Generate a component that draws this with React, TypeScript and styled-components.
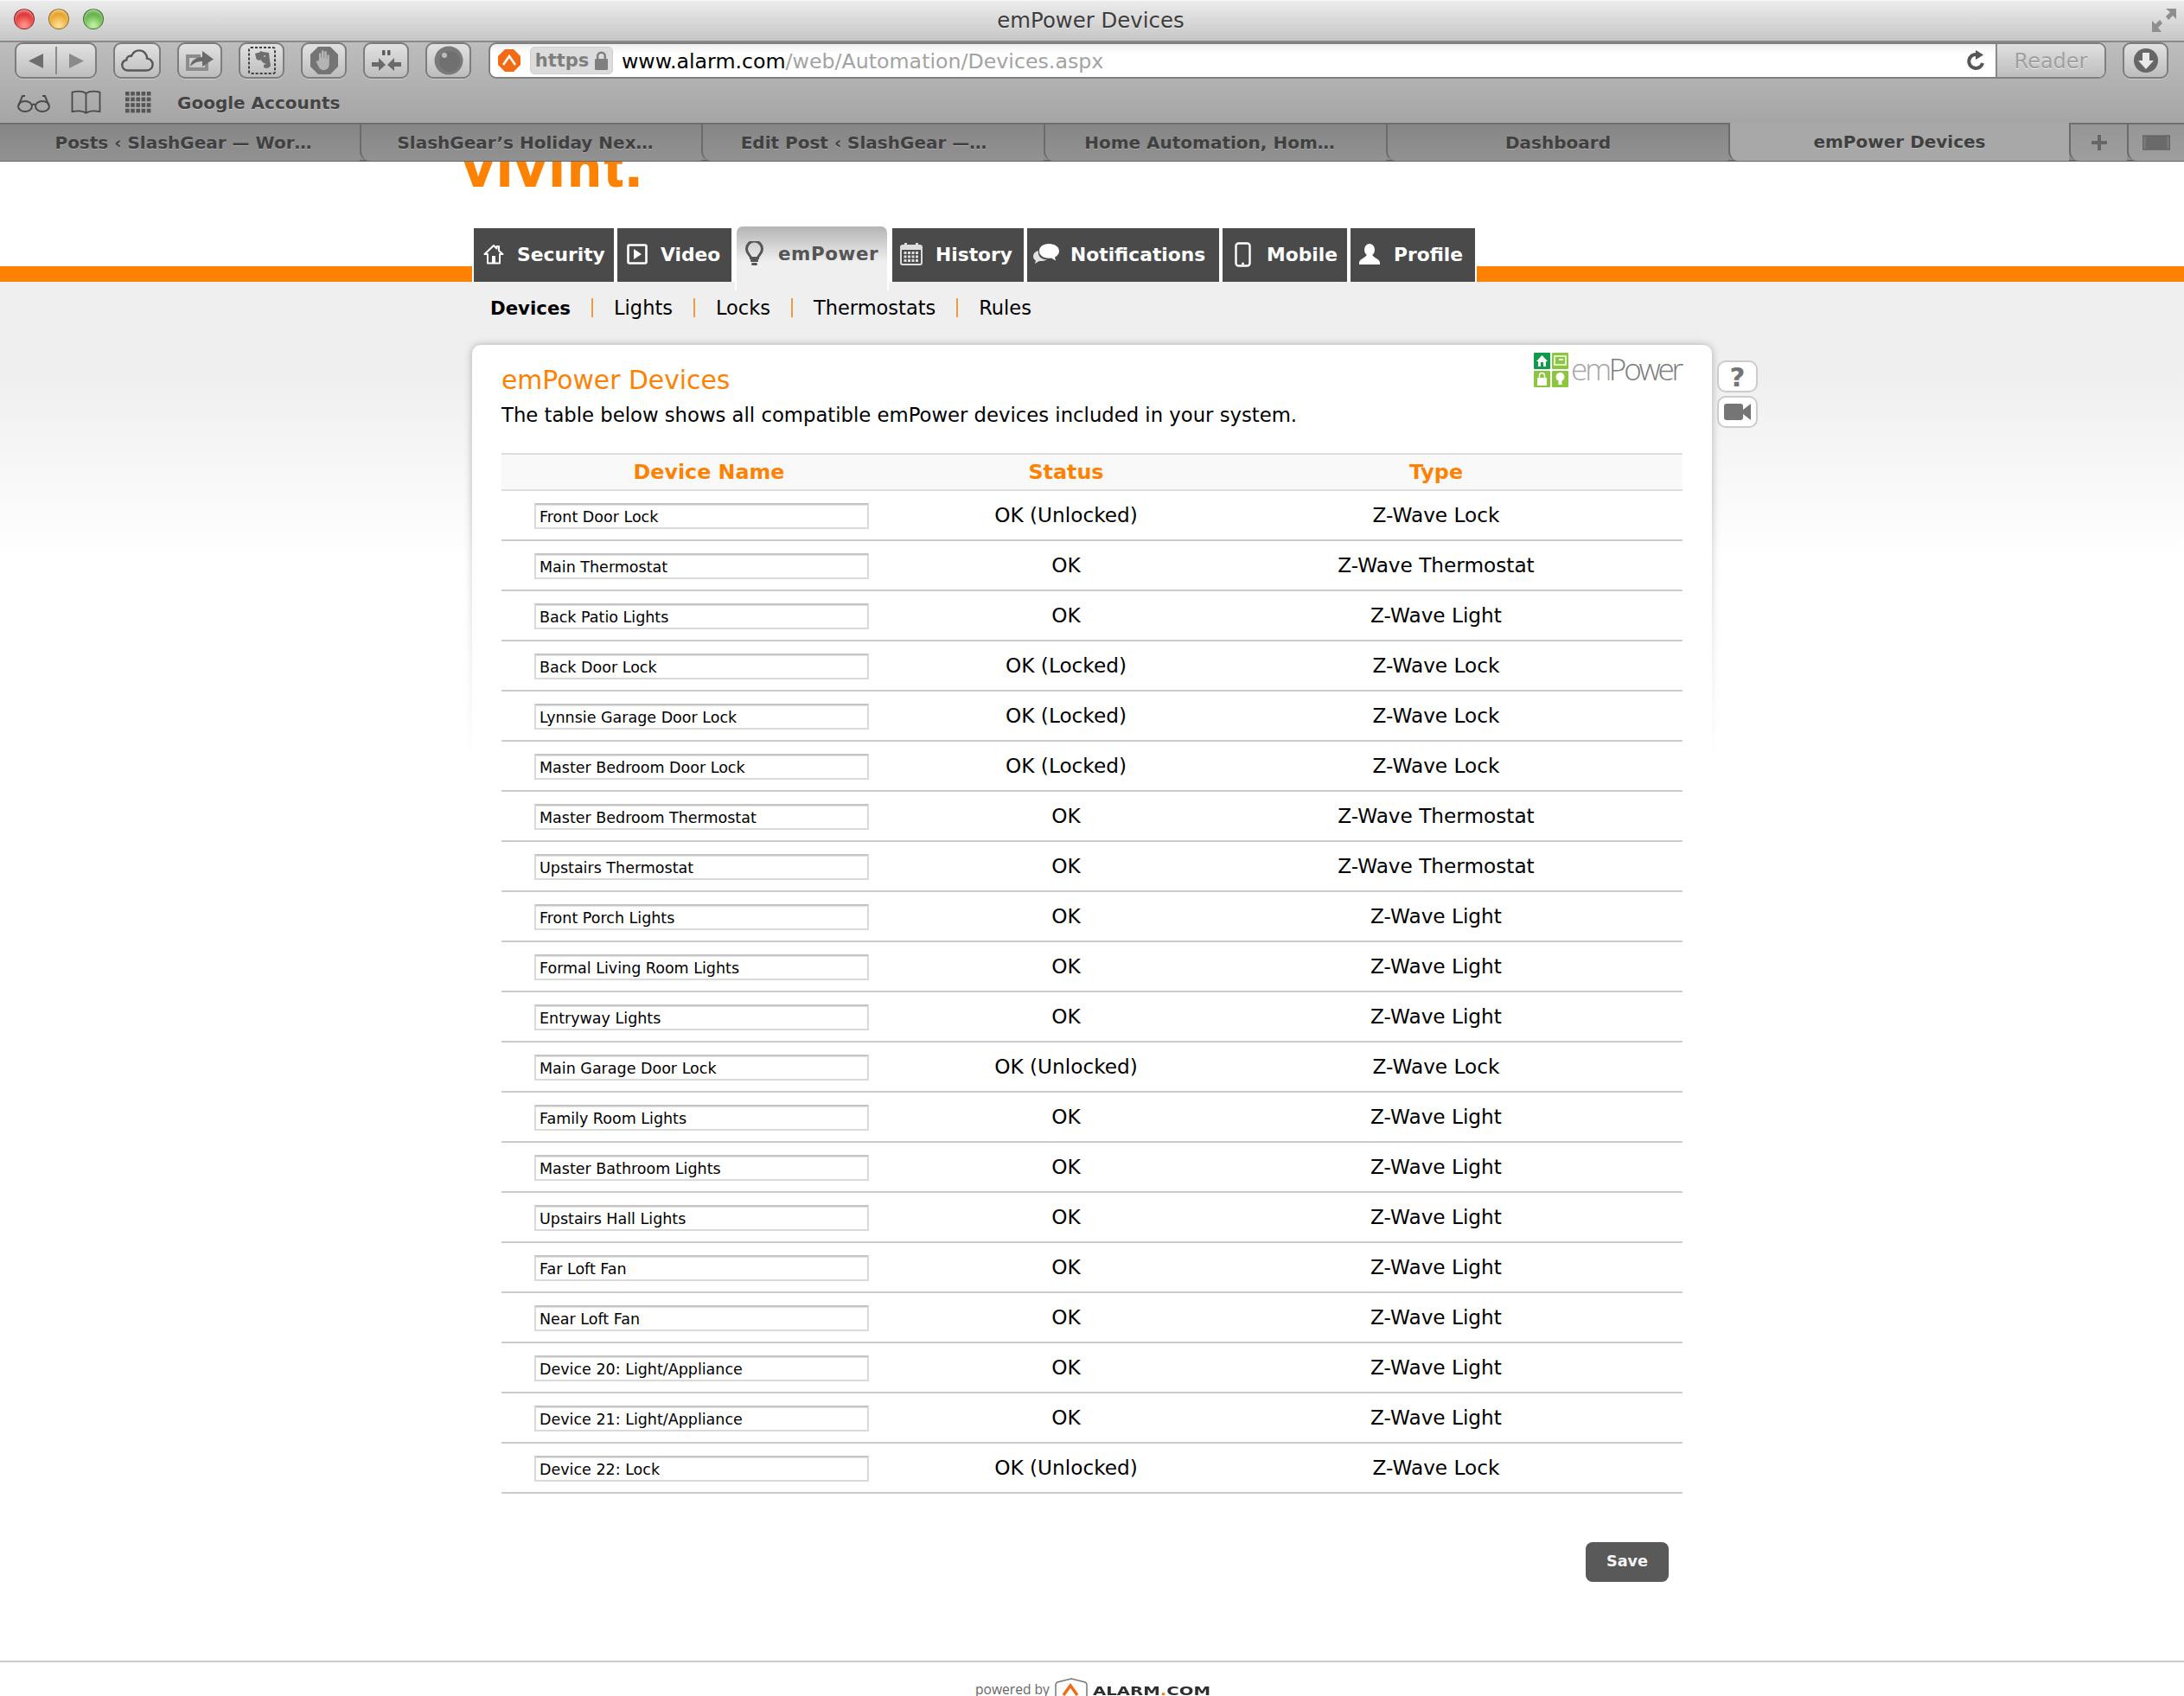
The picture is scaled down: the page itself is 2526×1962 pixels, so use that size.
import React from 'react';
import styled, { createGlobalStyle } from 'styled-components';

const GlobalStyle = createGlobalStyle`
  html, body {
    margin: 0;
    padding: 0;
    background: #fff;
  }
  body {
    width: 2526px;
    height: 1962px;
    overflow: hidden;
    font-family: "DejaVu Sans", Verdana, sans-serif;
    color: #000;
  }
`;

const ORANGE = '#fd8204';
const NAV_DARK = '#4a4a4a';

const TitleBar = styled.div`
  position: relative;
  height: 47px;
  box-sizing: border-box;
  display: flex;
  align-items: center;
  justify-content: center;
  background: linear-gradient(#ececec, #c6c6c6);
  border-top: 1px solid #f6f6f6;
`;

const Lights = styled.div`
  position: absolute;
  left: 16px;
  top: 9px;
  display: flex;
  gap: 16px;
`;

const Light = styled.span<{ $c: string; $d: string }>`
  width: 24px;
  height: 24px;
  border-radius: 50%;
  border: 1px solid rgba(0, 0, 0, 0.35);
  box-sizing: border-box;
  background: radial-gradient(circle at 50% 85%, ${(p) => p.$c} 10%, ${(p) => p.$d} 70%);
  box-shadow: inset 0 3px 3px rgba(255, 255, 255, 0.45);
`;

const WindowTitle = styled.div`
  font-size: 24.4px;
  color: #3d3d3d;
  text-shadow: 0 1px 0 rgba(255, 255, 255, 0.5);
  padding: 0 3px 2px 0;
`;

const FullScreen = styled.svg`
  position: absolute;
  right: 8px;
  top: 8px;
`;

const Toolbar = styled.div`
  height: 95px;
  box-sizing: border-box;
  border-top: 2px solid #8a8a8a;
  background: linear-gradient(#bdbdbd, #a5a5a5);
`;

const Controls = styled.div`
  display: flex;
  gap: 19px;
  padding: 0 18px 0 17px;
  height: 42px;
`;

const ChromeButton = styled.div<{ $w: number }>`
  width: ${(p) => p.$w}px;
  height: 42px;
  flex: none;
  box-sizing: border-box;
  display: flex;
  align-items: center;
  justify-content: center;
  border: 2px solid #7d7d7d;
  border-radius: 9px;
  background: linear-gradient(#e2e2e2, #bdbdbd);
  box-shadow: 0 1px 0 rgba(255, 255, 255, 0.35);
`;

const NavDivider = styled.span`
  width: 2px;
  height: 32px;
  background: #8a8a8a;
  margin: 0 14px;
`;

const UrlBar = styled.div`
  flex: 1;
  display: flex;
  align-items: center;
  height: 42px;
  box-sizing: border-box;
  margin-left: 1px;
  border: 2px solid #808080;
  border-radius: 9px;
  background: linear-gradient(#f0f0f0, #fff 30%);
  overflow: hidden;
`;

const SiteIcon = styled.svg`
  margin-left: 8px;
  flex: none;
`;

const HttpsBadge = styled.div`
  display: flex;
  align-items: center;
  gap: 7px;
  width: 96px;
  height: 32px;
  box-sizing: border-box;
  justify-content: center;
  margin-left: 10px;
  background: #dcdcdc;
  border: 1px solid #cfcfcf;
  border-radius: 5px;
  font-weight: 700;
  font-size: 21px;
  color: #7f7f7f;
`;

const UrlText = styled.div`
  margin: 2px 0 0 10px;
  flex: 1;
  font-size: 23.7px;
  color: #000;
  white-space: nowrap;
`;

const UrlPath = styled.span`
  color: #a3a3a3;
`;

const Reload = styled.svg`
  margin-right: 12px;
  flex: none;
`;

const Reader = styled.div`
  width: 126px;
  height: 100%;
  padding-top: 2px;
  box-sizing: border-box;
  flex: none;
  display: flex;
  align-items: center;
  justify-content: center;
  border-left: 2px solid #8a8a8a;
  background: linear-gradient(#e0e0e0, #bdbdbd);
  color: #a0a0a0;
  font-size: 24px;
  text-shadow: 0 1px 0 #eee;
`;

const Bookmarks = styled.div`
  display: flex;
  align-items: center;
  gap: 24px;
  height: 50px;
  padding: 3px 0 0 20px;
  box-sizing: border-box;
  margin-top: 1px;
`;

const BookmarkLabel = styled.span`
  font-size: 20px;
  font-weight: 700;
  color: #444;
  text-shadow: 0 1px 0 rgba(255, 255, 255, 0.3);
`;

const TabStrip = styled.div`
  display: grid;
  grid-template-columns: 416px 395px 396px 396px 396px 394px 67px 66px;
  height: 45px;
  box-sizing: border-box;
  border-bottom: 2px solid #666;
  background: #8f8f8f;
`;

const TabItem = styled.div<{ $active?: boolean; $first?: boolean; $left?: number; $right?: number }>`
  display: flex;
  align-items: center;
  justify-content: center;
  box-sizing: border-box;
  height: 44px;
  padding: 0 ${(p) => p.$right ?? 0}px 0 ${(p) => p.$left ?? 0}px;
  font-size: 20px;
  font-weight: 700;
  color: #404040;
  white-space: nowrap;
  text-shadow: 0 1px 0 rgba(255, 255, 255, 0.25);
  background: ${(p) => (p.$active ? '#a8a8a8' : 'linear-gradient(#868686, #929292)')};
  border-top: ${(p) => (p.$active ? '0' : '2px solid #6e6e6e')};
  border-left: ${(p) => (p.$first ? '0' : '2px solid #6b6b6b')};
  border-bottom-left-radius: ${(p) => (p.$first ? '0' : '11px')};
`;

const TabTool = styled(TabItem)`
  background: linear-gradient(#969696, #9e9e9e);
`;

const Masthead = styled.div`
  height: 139px;
  display: flex;
  flex-direction: column;
  background: #fff;
`;

// the page is scrolled, so the logo shows only its lower part
const LogoClip = styled.div`
  height: 33px;
  overflow: hidden;
  padding-left: 536px;
  display: flex;
  align-items: flex-end;
`;

const Logo = styled.div`
  font-family: "Liberation Sans", Arial, sans-serif;
  font-weight: 700;
  font-size: 62px;
  line-height: 31px;
  letter-spacing: 4.4px;
  color: ${ORANGE};
  -webkit-text-stroke: 2px ${ORANGE};
  margin-bottom: 11px;
  flex: none;
`;

const Nav = styled.div`
  flex: 1;
  display: flex;
  align-items: flex-end;
  gap: 4px;
`;

const NavBarLeft = styled.div`
  flex: 0 0 546px;
  height: 18px;
  margin-right: -2px;
  background: ${ORANGE};
`;

const NavBarRight = styled.div`
  flex: 1;
  height: 18px;
  margin-left: -2px;
  background: ${ORANGE};
`;

const NavTab = styled.div<{ $w: number; $gap?: number; $pad?: number }>`
  width: ${(p) => p.$w}px;
  height: 62px;
  flex: none;
  box-sizing: border-box;
  display: flex;
  align-items: center;
  gap: ${(p) => p.$gap ?? 15}px;
  padding: 0 0 2px ${(p) => p.$pad ?? 11}px;
  background: ${NAV_DARK};
  color: #fff;
  font-size: 21.8px;
  font-weight: 700;
  white-space: nowrap;
`;

const NavTabActive = styled(NavTab)`
  height: 76px;
  margin-bottom: -10px;
  padding: 0 0 12px 10px;
  position: relative;
  z-index: 1;
  color: #555;
  font-size: 21.4px;
  letter-spacing: 0.6px;
  background: linear-gradient(#b4b4b4, #efefef 55%);
  border: 2px solid #fff;
  border-bottom: 0;
  border-radius: 9px 9px 0 0;
`;

const Content = styled.div`
  background: linear-gradient(#efefef, #efefef 104px, #fff 324px);
`;

const SubNav = styled.div`
  display: flex;
  align-items: center;
  height: 60px;
  margin-bottom: 13px;
  padding-left: 567px;
`;

const SubLink = styled.span<{ $active?: boolean }>`
  font-weight: ${(p) => (p.$active ? 700 : 400)};
  font-size: ${(p) => (p.$active ? '21.3px' : '22.5px')};
`;

const SubSep = styled.span`
  width: 2px;
  height: 22px;
  margin: 0 24px;
  background: #ef9a4a;
`;

const Card = styled.div`
  position: relative;
  z-index: 0;
  width: 1434px;
  margin-left: 546px;
  box-sizing: border-box;
  padding: 21px 34px 0;
  background: #fff;
  border-radius: 10px 10px 0 0;
`;

const CardGlow = styled.div`
  position: absolute;
  z-index: -1;
  left: -16px;
  right: -16px;
  top: -16px;
  height: 500px;
  -webkit-mask-image: linear-gradient(#000 40%, transparent);
  mask-image: linear-gradient(#000 40%, transparent);

  &::before {
    content: '';
    position: absolute;
    inset: 16px 16px 0;
    border-radius: 10px 10px 0 0;
    background: #fff;
    box-shadow: 0 0 10px rgba(0, 0, 0, 0.28);
  }
`;

const EmpowerMark = styled.div`
  position: absolute;
  right: 36px;
  top: 9px;
  display: flex;
  align-items: flex-start;
  gap: 3px;
`;

const EmpowerWord = styled.div`
  font-family: "Open Sans", sans-serif;
  font-weight: 300;
  font-size: 35px;
  line-height: 40px;
  letter-spacing: -3.2px;
  color: #7c7c7c;
  margin-top: -1px;
  white-space: nowrap;
`;

const EmpowerEm = styled.span`
  color: #a6a6a6;
`;

const HelpStack = styled.div`
  position: absolute;
  left: 1440px;
  top: 18px;
  display: flex;
  flex-direction: column;
  gap: 4px;
`;

const HelpButton = styled.div`
  width: 47px;
  height: 37px;
  box-sizing: border-box;
  display: flex;
  align-items: center;
  justify-content: center;
  background: #fff;
  border: 2px solid #ccc;
  border-radius: 10px;
  color: #757575;
  font-weight: 700;
  font-size: 31px;
`;

const Heading = styled.h1`
  margin: 0;
  font-size: 29.8px;
  line-height: 40px;
  font-weight: 400;
  color: ${ORANGE};
`;

const Lead = styled.p`
  margin: 0 0 22px;
  font-size: 22.74px;
  line-height: 41px;
`;

const HeaderRow = styled.div`
  display: grid;
  grid-template-columns: 480px 346px 510px;
  height: 44px;
  margin-top: 23px;
  box-sizing: border-box;
  align-items: center;
  text-align: center;
  border-top: 2px solid #ddd;
  border-bottom: 2px solid #ddd;
  background: #f9f9f9;
  color: ${ORANGE};
  font-size: 23.8px;
  font-weight: 700;
`;

const DeviceRow = styled.div`
  display: grid;
  grid-template-columns: 480px 346px 510px;
  height: 58px;
  box-sizing: border-box;
  padding-bottom: 1px;
  align-items: center;
  text-align: center;
  border-bottom: 2px solid #ccc;
  font-size: 23.2px;
`;

const NameField = styled.div`
  width: 387px;
  height: 30px;
  margin: 3px 0 0 38px;
  box-sizing: border-box;
  padding-left: 4px;
  text-align: left;
  font-size: 17.5px;
  line-height: 28px;
  white-space: nowrap;
  background: #fff;
  border: 2px solid #dadada;
  border-top-color: #c4c4c4;
  box-shadow: inset 0 1px 1px #e2e2e2;
`;

const Actions = styled.div`
  display: flex;
  justify-content: flex-end;
  padding: 56px 16px 0 0;
`;

const SaveButton = styled.button`
  width: 96px;
  height: 46px;
  border: 0;
  border-radius: 8px;
  background: #595959;
  color: #f4f4f4;
  font-family: inherit;
  font-size: 17.6px;
  font-weight: 700;
  padding: 0 0 2px;
`;

const Footer = styled.div`
  margin-top: 91px;
  height: 42px;
  box-sizing: border-box;
  border-top: 2px solid #ccc;
  display: flex;
  align-items: flex-start;
  padding: 22px 0 0 1128px;
  overflow: hidden;
`;

const Powered = styled.span`
  font-family: "Open Sans", sans-serif;
  font-size: 15.6px;
  line-height: 18px;
  color: #666;
  white-space: nowrap;
  margin-right: 6px;
`;

const AlarmArch = styled.svg`
  margin-top: -4px;
  flex: none;
`;

const AlarmWord = styled.span`
  display: inline-block;
  margin: 4px 0 0 6px;
  font-weight: 700;
  font-size: 13.5px;
  line-height: 14px;
  color: #2e2e2e;
  transform: scaleX(1.46);
  transform-origin: left center;
  white-space: nowrap;
`;

const AlarmDot = styled.span`
  color: ${ORANGE};
`;

type Device = [string, string, string];

const devices: Device[] = [
  ['Front Door Lock', 'OK (Unlocked)', 'Z-Wave Lock'],
  ['Main Thermostat', 'OK', 'Z-Wave Thermostat'],
  ['Back Patio Lights', 'OK', 'Z-Wave Light'],
  ['Back Door Lock', 'OK (Locked)', 'Z-Wave Lock'],
  ['Lynnsie Garage Door Lock', 'OK (Locked)', 'Z-Wave Lock'],
  ['Master Bedroom Door Lock', 'OK (Locked)', 'Z-Wave Lock'],
  ['Master Bedroom Thermostat', 'OK', 'Z-Wave Thermostat'],
  ['Upstairs Thermostat', 'OK', 'Z-Wave Thermostat'],
  ['Front Porch Lights', 'OK', 'Z-Wave Light'],
  ['Formal Living Room Lights', 'OK', 'Z-Wave Light'],
  ['Entryway Lights', 'OK', 'Z-Wave Light'],
  ['Main Garage Door Lock', 'OK (Unlocked)', 'Z-Wave Lock'],
  ['Family Room Lights', 'OK', 'Z-Wave Light'],
  ['Master Bathroom Lights', 'OK', 'Z-Wave Light'],
  ['Upstairs Hall Lights', 'OK', 'Z-Wave Light'],
  ['Far Loft Fan', 'OK', 'Z-Wave Light'],
  ['Near Loft Fan', 'OK', 'Z-Wave Light'],
  ['Device 20: Light/Appliance', 'OK', 'Z-Wave Light'],
  ['Device 21: Light/Appliance', 'OK', 'Z-Wave Light'],
  ['Device 22: Lock', 'OK (Unlocked)', 'Z-Wave Lock'],
];

// side paddings keep each title where the real tab strip has it
const browserTabs = [
  { title: 'Posts ‹ SlashGear — Wor…', left: 8, right: 0 },
  { title: 'SlashGear’s Holiday Nex…', left: 0, right: 14 },
  { title: 'Edit Post ‹ SlashGear —…', left: 0, right: 22 },
  { title: 'Home Automation, Hom…', left: 0, right: 14 },
  { title: 'Dashboard', left: 0, right: 0 },
];

const subLinks = ['Lights', 'Locks', 'Thermostats', 'Rules'];

const CloudIcon = () => (
  <svg width="38" height="26" viewBox="0 0 38 26">
    <path
      d="M8 24.500C3.800 24.500 1.300 21.600 1.300 18.400c0-3 2-5.400 5-5.900C6.400 9.200 9 7.200 12 7.800 13.800 3.600 17.200 1.400 21 1.400c5.400 0 9 4.200 9 9.200 3.800.4 6.600 3.400 6.600 7 0 3.800-3 6.900-7 6.900z"
      fill="none"
      stroke="#585858"
      strokeWidth="2.400"
    />
  </svg>
);

const ShareIcon = () => (
  <svg width="34" height="26" viewBox="0 0 34 26">
    <path d="M1 6h17v4H5v11h18v-5h4v9H1z" fill="#8c8c8c" />
    <path d="M6 20c1-7 6-11 14-11V2l13 9.500L20 20v-6c-6 0-10 2-14 6z" fill="#6a6a6a" />
  </svg>
);

const EvernoteIcon = () => (
  <svg width="32" height="32" viewBox="0 0 32 32">
    <rect x="1" y="1" width="30" height="30" rx="2" fill="none" stroke="#3f3f3f" strokeWidth="2" strokeDasharray="3 2" />
    <path
      d="M8 8l3-1h2l1-2 3 1 7 1 1 9 1 6c-1 2-3 3-5 3l-3-1 0-3 3-1-3-1c-2-1-3-3-3-4-1 1-3 1-5 0-1-2-1-3-2-7z"
      fill="#6e6e6e"
    />
    <circle cx="19" cy="11" r="1" fill="#ccc" />
  </svg>
);

const HandIcon = () => (
  <svg width="34" height="34" viewBox="0 0 34 34">
    <path d="M10 1h14l9 9v14l-9 9H10l-9-9V10z" fill="#747474" />
    <path
      d="M11 15V9.500c0-1.800 2.400-1.800 2.400 0V14h.6V6.500c0-1.800 2.600-1.800 2.600 0V14h.6V7.500c0-1.800 2.600-1.800 2.600 0V15h.6v-3.500c0-1.700 2.400-1.700 2.400 0V21c0 4.500-2.800 7-6.400 7-3 0-4.600-1.600-6-4l-2.400-5c-.6-1.600 1.200-2.400 2.200-1z"
      fill="#b4b4b4"
    />
  </svg>
);

const ConvergeIcon = () => (
  <svg width="36" height="26" viewBox="0 0 36 26">
    <path d="M1 15h8v-5l8 8-8 7v-5H1zM35 15h-8v-5l-8 8 8 7v-5h8z" fill="#6a6a6a" />
    <rect x="13" y="1" width="3.500" height="6" rx="1" fill="#5a5a5a" />
    <rect x="19" y="1" width="3.500" height="6" rx="1" fill="#5a5a5a" />
  </svg>
);

const LensIcon = () => (
  <svg width="34" height="34" viewBox="0 0 34 34">
    <circle cx="17" cy="17" r="16.500" fill="#7a7a7a" />
    <circle cx="18" cy="18" r="12" fill="#707070" />
    <circle cx="12" cy="11" r="3" fill="#bdbdbd" />
  </svg>
);

const SiteMark = () => (
  <SiteIcon width="28" height="28" viewBox="0 0 28 28">
    <path d="M9 1h10l8 8v10l-8 8H9l-8-8V9z" fill="#f26a12" />
    <path d="M7 19l7-10 7 10" fill="none" stroke="#fff" strokeWidth="2.600" />
  </SiteIcon>
);

const LockIcon = () => (
  <svg width="15" height="22" viewBox="0 0 15 22">
    <rect x="0" y="9" width="15" height="13" rx="1" fill="#7f7f7f" />
    <path d="M3.200 10V6a4.300 4.300 0 0 1 8.600 0v4" fill="none" stroke="#7f7f7f" strokeWidth="2.400" />
  </svg>
);

const DownloadIcon = () => (
  <svg width="30" height="30" viewBox="0 0 30 30">
    <circle cx="15" cy="15" r="14" fill="#666" />
    <path d="M11 6h8v9h5l-9 10-9-10h5z" fill="#e8e8e8" />
  </svg>
);

const BookIcon = () => (
  <svg width="39" height="30" viewBox="0 0 39 30">
    <path
      d="M17.500 4C14 1.600 7 1.400 1.500 2.600v22.600c5.500-1.200 12.500-1 16 1.600 3.500-2.600 10.500-2.800 16-1.600V2.600C28 1.400 21 1.600 17.500 4zM17.500 4v23"
      fill="none"
      stroke="#4a4a4a"
      strokeWidth="1.800"
    />
  </svg>
);

const AppsGrid = () => (
  <svg width="36" height="26" viewBox="0 0 36 26">
    <g fill="#555">
      {[0, 1, 2, 3].map((r) =>
        [0, 1, 2, 3, 4].map((c) => <rect key={`${r}-${c}`} x={c * 6.200} y={r * 6.600} width="4.600" height="4.600" />)
      )}
    </g>
  </svg>
);

const GlassesIcon = () => (
  <svg width="38" height="22" viewBox="0 0 38 22">
    <g fill="none" stroke="#4a4a4a" strokeWidth="2">
      <ellipse cx="9" cy="15" rx="8" ry="6" />
      <ellipse cx="29" cy="15" rx="8" ry="6" />
      <path d="M17 14c1-2 3-2 4 0M1.500 14L6 3h3M36.500 14L32 3h-3" />
    </g>
  </svg>
);

const HouseIcon = () => (
  <svg width="24" height="24" viewBox="0 0 24 24">
    <path d="M12 2L1.500 12H5v10.500h14V12h3.500L18 8V3h-2.500v2.600z" fill="none" stroke="#fff" strokeWidth="2" strokeLinejoin="round" />
    <rect x="10" y="14" width="4" height="8" fill="#fff" />
  </svg>
);

const PlayIcon = () => (
  <svg width="24" height="24" viewBox="0 0 24 24">
    <rect x="1.500" y="1.500" width="21" height="21" rx="1.500" fill="none" stroke="#fff" strokeWidth="2.600" />
    <path d="M8 6l9 6-9 6z" fill="#fff" />
  </svg>
);

const BulbIcon = () => (
  <svg width="21" height="28" viewBox="0 0 21 28">
    <path d="M6.500 19.500c0-3-5-5-5-10.500a9 9 0 0 1 18 0c0 5.500-5 7.500-5 10.500z" fill="none" stroke="#555" strokeWidth="3" />
    <rect x="6" y="21" width="9" height="3" rx="1" fill="#555" />
    <rect x="7" y="25" width="7" height="3" rx="1.500" fill="#555" />
  </svg>
);

const CalendarIcon = () => (
  <svg width="26" height="26" viewBox="0 0 26 26">
    <rect x="1" y="3" width="24" height="22" rx="2" fill="none" stroke="#ddd" strokeWidth="2" />
    <rect x="1" y="3" width="24" height="5" fill="#ddd" />
    <rect x="5" y="0" width="3" height="5" fill="#ddd" />
    <rect x="18" y="0" width="3" height="5" fill="#ddd" />
    <g fill="#ddd">
      {[0, 1, 2].map((r) =>
        [0, 1, 2, 3].map((c) => <rect key={`${r}-${c}`} x={4.500 + c * 4.500} y={10 + r * 4.500} width="3" height="3" />)
      )}
    </g>
  </svg>
);

const BubblesIcon = () => (
  <svg width="30" height="24" viewBox="0 0 30 24">
    <path d="M18 0c7 0 12 3.500 12 8.500 0 3-2 5.500-5 7l1 4-5-3c-1 .2-2 .2-3 .2-7 0-11-3.700-11-8.200S11 0 18 0z" fill="#fff" />
    <path d="M6 8c-4 1-6 3.500-6 6.500 0 2 1 4 3 5l-1 3.500 5-3c4 .4 7-.5 9-2-6 .5-11-3-10-10z" fill="#e0e0e0" />
  </svg>
);

const PhoneIcon = () => (
  <svg width="19" height="29" viewBox="0 0 19 29">
    <rect x="1.500" y="1.500" width="16" height="26" rx="3" fill="none" stroke="#fff" strokeWidth="2.400" />
    <circle cx="9.500" cy="25" r="1.500" fill="#fff" />
  </svg>
);

const PersonIcon = () => (
  <svg width="24" height="24" viewBox="0 0 24 24">
    <ellipse cx="12" cy="7" rx="6" ry="7" fill="#fff" />
    <path d="M9 12c0 4-9 5-9 10v2h24v-2c0-5-9-6-9-10z" fill="#fff" />
  </svg>
);

const EmpowerTiles = () => (
  <svg width="40" height="40" viewBox="0 0 40 40">
    <rect x="0" y="0" width="19" height="19" rx="1" fill="#0f9a4c" />
    <rect x="21" y="0" width="19" height="19" rx="1" fill="#8cc63f" />
    <rect x="0" y="21" width="19" height="19" rx="1" fill="#8cc63f" />
    <rect x="21" y="21" width="19" height="19" rx="1" fill="#8cc63f" />
    <path d="M9.500 3L3 10h2v6h9v-6h2z" fill="#fff" />
    <rect x="8" y="11" width="3" height="5" fill="#0f9a4c" />
    <rect x="24" y="4" width="13" height="10" fill="none" stroke="#fff" strokeWidth="1.500" />
    <rect x="29" y="7" width="5" height="2" fill="#fff" />
    <rect x="4" y="29" width="11" height="9" fill="#fff" />
    <path d="M6.500 29v-2.500a3 3 0 0 1 6 0V29" fill="none" stroke="#fff" strokeWidth="1.500" />
    <circle cx="30.500" cy="28" r="5" fill="#fff" />
    <rect x="28.500" y="32" width="4" height="5" fill="#fff" />
  </svg>
);

const CameraIcon = () => (
  <svg width="32" height="21" viewBox="0 0 32 21">
    <rect x="0" y="1" width="22" height="19" rx="3" fill="#757575" />
    <path d="M22 8l9-7v19l-9-7z" fill="#757575" />
  </svg>
);

export default function App() {
  return (
    <>
      <GlobalStyle />
      <TitleBar>
        <Lights>
          <Light $c="#ff8d85" $d="#d8262a" />
          <Light $c="#ffd98a" $d="#e29a18" />
          <Light $c="#b6ec9a" $d="#55a83a" />
        </Lights>
        <WindowTitle>emPower Devices</WindowTitle>
        <FullScreen width="30" height="29" viewBox="0 0 30 29">
          <path d="M17 1h12v12l-4-4-5 5-3-4 5-5zM1 28V15l4 4 5-5 3 4-5 5 4 5z" fill="#8e8e8e" />
        </FullScreen>
      </TitleBar>
      <Toolbar>
        <Controls>
          <ChromeButton $w={95}>
            <svg width="17" height="17" viewBox="0 0 17 17">
              <path d="M17 0v17L0 8.500z" fill="#6e6e6e" />
            </svg>
            <NavDivider />
            <svg width="17" height="17" viewBox="0 0 17 17">
              <path d="M0 0v17l17-8.500z" fill="#8a8a8a" />
            </svg>
          </ChromeButton>
          <ChromeButton $w={55}>
            <CloudIcon />
          </ChromeButton>
          <ChromeButton $w={52}>
            <ShareIcon />
          </ChromeButton>
          <ChromeButton $w={53}>
            <EvernoteIcon />
          </ChromeButton>
          <ChromeButton $w={53}>
            <HandIcon />
          </ChromeButton>
          <ChromeButton $w={53}>
            <ConvergeIcon />
          </ChromeButton>
          <ChromeButton $w={53}>
            <LensIcon />
          </ChromeButton>
          <UrlBar>
            <SiteMark />
            <HttpsBadge>
              https
              <LockIcon />
            </HttpsBadge>
            <UrlText>
              www.alarm.com<UrlPath>/web/Automation/Devices.aspx</UrlPath>
            </UrlText>
            <Reload width="22" height="24" viewBox="0 0 22 24">
              <path d="M19 15a8 8 0 1 1-7-10" fill="none" stroke="#555" strokeWidth="4" />
              <path d="M11 0l9 5.500-9 5.500z" fill="#555" />
            </Reload>
            <Reader>Reader</Reader>
          </UrlBar>
          <ChromeButton $w={53}>
            <DownloadIcon />
          </ChromeButton>
        </Controls>
        <Bookmarks>
          <GlassesIcon />
          <BookIcon />
          <AppsGrid />
          <BookmarkLabel>Google Accounts</BookmarkLabel>
        </Bookmarks>
      </Toolbar>
      <TabStrip>
        {browserTabs.map((tab, i) => (
          <TabItem key={tab.title} $first={i === 0} $left={tab.left} $right={tab.right}>
            {tab.title}
          </TabItem>
        ))}
        <TabItem $active>emPower Devices</TabItem>
        <TabTool>
          <svg width="18" height="18" viewBox="0 0 18 18">
            <path d="M7 0h4v7h7v4h-7v7H7v-7H0V7h7z" fill="#666" />
          </svg>
        </TabTool>
        <TabTool>
          <svg width="32" height="18" viewBox="0 0 32 18">
            <rect x="0" y="1" width="32" height="16" fill="#777" stroke="#555" />
            <rect x="4" y="2" width="24" height="14" fill="#6a6a6a" />
          </svg>
        </TabTool>
      </TabStrip>
      <Masthead>
        <LogoClip>
          <Logo>vivint.</Logo>
        </LogoClip>
        <Nav>
          <NavBarLeft />
          <NavTab $w={162}>
            <HouseIcon />
            Security
          </NavTab>
          <NavTab $w={132}>
            <PlayIcon />
            Video
          </NavTab>
          <NavTabActive $w={178} $gap={17}>
            <BulbIcon />
            emPower
          </NavTabActive>
          <NavTab $w={152} $gap={15} $pad={9}>
            <CalendarIcon />
            History
          </NavTab>
          <NavTab $w={222} $gap={13} $pad={7}>
            <BubblesIcon />
            Notifications
          </NavTab>
          <NavTab $w={144} $gap={18} $pad={14}>
            <PhoneIcon />
            Mobile
          </NavTab>
          <NavTab $w={144} $gap={16} $pad={10}>
            <PersonIcon />
            Profile
          </NavTab>
          <NavBarRight />
        </Nav>
      </Masthead>
      <Content>
        <SubNav>
          <SubLink $active>Devices</SubLink>
          {subLinks.map((label) => (
            <React.Fragment key={label}>
              <SubSep />
              <SubLink>{label}</SubLink>
            </React.Fragment>
          ))}
        </SubNav>
        <Card>
          <CardGlow />
          <EmpowerMark>
            <EmpowerTiles />
            <EmpowerWord>
              <EmpowerEm>em</EmpowerEm>Power
            </EmpowerWord>
          </EmpowerMark>
          <HelpStack>
            <HelpButton>?</HelpButton>
            <HelpButton>
              <CameraIcon />
            </HelpButton>
          </HelpStack>
          <Heading>emPower Devices</Heading>
          <Lead>The table below shows all compatible emPower devices included in your system.</Lead>
          <HeaderRow>
            <div>Device Name</div>
            <div>Status</div>
            <div>Type</div>
          </HeaderRow>
          {devices.map(([name, status, type]) => (
            <DeviceRow key={name}>
              <NameField>{name}</NameField>
              <div>{status}</div>
              <div>{type}</div>
            </DeviceRow>
          ))}
          <Actions>
            <SaveButton>Save</SaveButton>
          </Actions>
        </Card>
        <Footer>
          <Powered>powered by</Powered>
          <AlarmArch width="38" height="24" viewBox="0 0 38 24">
            <path d="M1 23V8Q1 6 3 5L19 1l16 4q2 1 2 3v15" fill="none" stroke="#777" strokeWidth="1.500" />
            <path d="M10 20L18 9l8 11" fill="none" stroke="#f26a12" strokeWidth="3.400" />
          </AlarmArch>
          <AlarmWord>
            ALARM<AlarmDot>.</AlarmDot>COM
          </AlarmWord>
        </Footer>
      </Content>
    </>
  );
}
